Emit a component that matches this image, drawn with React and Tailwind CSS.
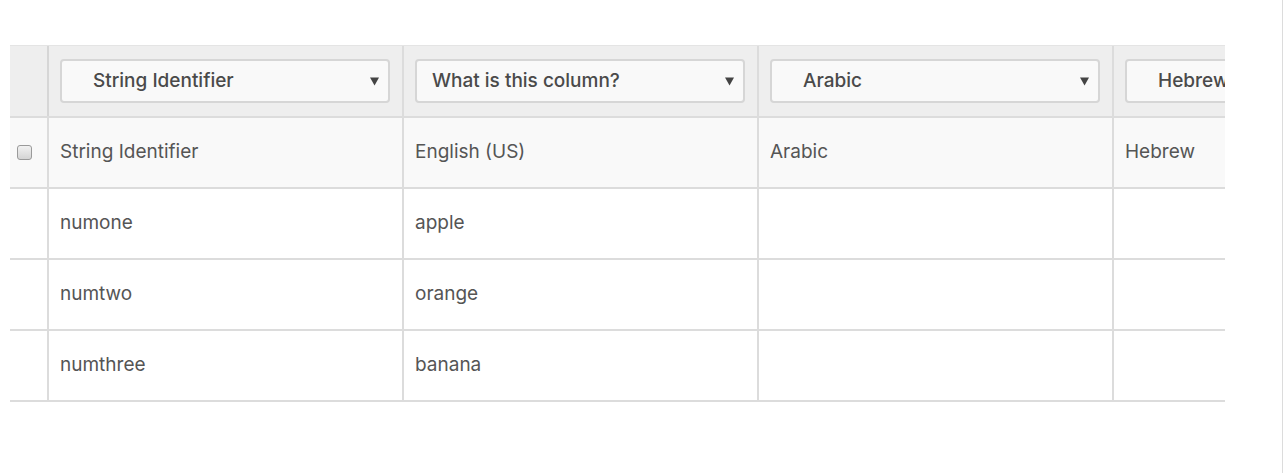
import React from "react";

const font = { fontFamily: 'Inter, "Open Sans", "Liberation Sans", sans-serif' };

const columns = [
  { select: "String Identifier", indent: "pl-[31px]", head: "String Identifier" },
  { select: "What is this column?", indent: "pl-[15px]", head: "English (US)" },
  { select: "Arabic", indent: "pl-[31px]", head: "Arabic" },
  { select: "Hebrew", indent: "pl-[31px]", head: "Hebrew" },
];

const rows = [
  ["numone", "apple", "", ""],
  ["numtwo", "orange", "", ""],
  ["numthree", "banana", "", ""],
];

const SelectBox = ({ label, indent }) => (
  <div
    className={`flex items-center justify-between h-[44px] w-[330px] ml-[11px] rounded border-2 border-[#d6d6d6] bg-[#f9f9f9] ${indent} pr-[9px] text-[19px] font-medium text-[#4a4a4a]`}
  >
    <span className="whitespace-nowrap">{label}</span>
    <svg width="9" height="9" viewBox="0 0 9 9" className="shrink-0">
      <path d="M0 0.5 H9 L4.5 8.5 Z" fill="#444" />
    </svg>
  </div>
);

const App = () => {
  return (
    <div className="relative h-[473px] w-full bg-white border-r border-[#dcdcdc]" style={font}>
      <div className="pt-[45px] pl-[10px]">
        <div className="w-[1215px] overflow-hidden">
          <div className="w-[1500px] border-t border-[#e4e4e4]">

            {/* select row */}
            <div className="flex h-[72px] bg-[#eeeeee] border-b-2 border-[#dcdcdc]">
              <div className="w-[39px] shrink-0 border-r-2 border-[#d6d6d6]" />
              {columns.map((col, i) => (
                <div key={i} className="w-[355px] shrink-0 border-r-2 border-[#dcdcdc] flex items-center">
                  <SelectBox label={col.select} indent={col.indent} />
                </div>
              ))}
            </div>

            {/* header row */}
            <div className="flex h-[71px] bg-[#f9f9f9] border-b-2 border-[#dcdcdc] text-[19px] text-[#555555]">
              <div className="w-[39px] shrink-0 border-r-2 border-[#dcdcdc] flex items-center pl-[7px]">
                <div className="w-[15px] h-[15px] rounded-[3px] border border-[#9a9a9a] bg-gradient-to-b from-[#f2f2f2] to-[#d4d4d4]" />
              </div>
              {columns.map((col, i) => (
                <div key={i} className="w-[355px] shrink-0 border-r-2 border-[#dcdcdc] flex items-center pl-[11px]">
                  {col.head}
                </div>
              ))}
            </div>

            {/* data rows */}
            {rows.map((row, r) => (
              <div key={r} className="flex h-[71px] bg-white border-b-2 border-[#dcdcdc] text-[19px] text-[#555555]">
                <div className="w-[39px] shrink-0 border-r-2 border-[#dcdcdc]" />
                {row.map((cell, i) => (
                  <div key={i} className="w-[355px] shrink-0 border-r-2 border-[#dcdcdc] flex items-center pl-[11px]">
                    {cell}
                  </div>
                ))}
              </div>
            ))}

          </div>
        </div>
      </div>
    </div>
  );
};

export default App;
